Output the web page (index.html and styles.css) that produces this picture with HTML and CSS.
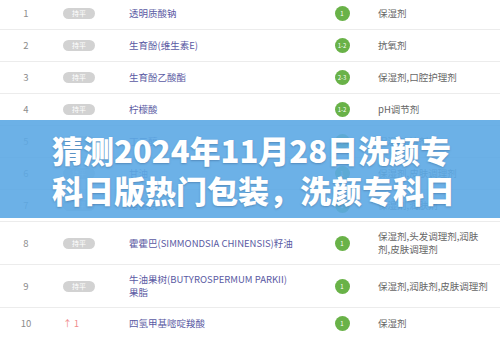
FILE: index.html
```html
<!DOCTYPE html>
<html lang="zh-CN">
<head>
<meta charset="utf-8">
<title>洗颜专科成分排行</title>
<link rel="stylesheet" href="styles.css">
</head>
<body>
<div class="page">
  <div class="list">
    <div class="row">
      <div class="rank">1</div>
      <div class="chg"><span class="pill">持平</span></div>
      <div class="name">透明质酸钠</div>
      <div class="safe"><span class="dot">1</span></div>
      <div class="use">保湿剂</div>
    </div>
    <div class="row">
      <div class="rank">2</div>
      <div class="chg"><span class="pill">持平</span></div>
      <div class="name">生育酚(维生素E)</div>
      <div class="safe"><span class="dot">1-2</span></div>
      <div class="use">抗氧剂</div>
    </div>
    <div class="row">
      <div class="rank">3</div>
      <div class="chg"><span class="pill">持平</span></div>
      <div class="name">生育酚乙酸酯</div>
      <div class="safe"><span class="dot">2-3</span></div>
      <div class="use">保湿剂,口腔护理剂</div>
    </div>
    <div class="row">
      <div class="rank">4</div>
      <div class="chg"><span class="pill">持平</span></div>
      <div class="name">柠檬酸</div>
      <div class="safe"><span class="dot">1-2</span></div>
      <div class="use">pH调节剂</div>
    </div>
    <div class="row">
      <div class="rank">5</div>
      <div class="chg"><span class="pill">持平</span></div>
      <div class="name">丁二醇</div>
      <div class="safe"><span class="dot">1</span></div>
      <div class="use">保湿剂,溶剂</div>
    </div>
    <div class="row">
      <div class="rank">6</div>
      <div class="chg"><span class="pill">持平</span></div>
      <div class="name">甘油</div>
      <div class="safe"><span class="dot">1</span></div>
      <div class="use">保湿剂,皮肤调理剂</div>
    </div>
    <div class="row">
      <div class="rank">7</div>
      <div class="chg"><span class="pill">持平</span></div>
      <div class="name">角鲨烷</div>
      <div class="safe"><span class="dot">1</span></div>
      <div class="use">保湿剂,润肤剂</div>
    </div>
    <div class="row">
      <div class="rank">8</div>
      <div class="chg"><span class="pill">持平</span></div>
      <div class="name">霍霍巴(SIMMONDSIA CHINENSIS)籽油</div>
      <div class="safe"><span class="dot">1</span></div>
      <div class="use">保湿剂,头发调理剂,润肤剂,皮肤调理剂</div>
    </div>
    <div class="row">
      <div class="rank">9</div>
      <div class="chg"><span class="pill">持平</span></div>
      <div class="name">牛油果树(BUTYROSPERMUM PARKII)果脂</div>
      <div class="safe"><span class="dot">1</span></div>
      <div class="use">保湿剂,润肤剂,皮肤调理剂</div>
    </div>
    <div class="row">
      <div class="rank">10</div>
      <div class="chg"><span class="up">↑ 1</span></div>
      <div class="name">四氢甲基嘧啶羧酸</div>
      <div class="safe"><span class="dot">1</span></div>
      <div class="use">保湿剂</div>
    </div>
  </div>
  <div class="banner">
    <h1 class="title">猜测2024年11月28日洗颜专科日版热门包装，洗颜专科日</h1>
  </div>
</div>
</body>
</html>
```

FILE: styles.css
```css
* { box-sizing: border-box; }

html, body {
  margin: 0;
  padding: 0;
  background: #ffffff;
}

body {
  font-family: "Noto Sans CJK SC", "Noto Sans", sans-serif;
  width: 500px;
  height: 339px;
  overflow: hidden;
}

.page {
  position: relative;
  width: 500px;
  height: 339px;
  overflow: hidden;
}

.list {
  margin-top: -2px;
}

.row {
  display: grid;
  grid-template-columns: 52px 77px 177px 72px 1fr;
  align-items: center;
  min-height: 32px;
  padding: 8px 0;
  border-bottom: 1px solid #ececec;
  font-size: 9.5px;
  line-height: 13px;
}

.rank {
  text-align: center;
  color: #8c8c8c;
}

.chg {
  padding-left: 11px;
  display: flex;
  align-items: center;
}

.pill {
  display: inline-block;
  width: 32px;
  height: 11px;
  border-radius: 6px;
  background: #d2d2d2;
  color: #ffffff;
  font-size: 7px;
  line-height: 11px;
  text-align: center;
}

.up {
  color: #ef8a8a;
  font-size: 9px;
}

.name {
  color: #5a5aa3;
  padding-right: 13px;
}

.safe {
  display: flex;
  justify-content: center;
}

.dot {
  width: 15px;
  height: 15px;
  border-radius: 50%;
  background: #69b248;
  color: #ffffff;
  font-size: 6px;
  line-height: 15px;
  text-align: center;
}

.use {
  color: #666666;
  padding-right: 12px;
}

.banner {
  position: absolute;
  left: 0;
  top: 120px;
  width: 500px;
  height: 98px;
  background: rgba(92, 168, 228, 0.9);
  padding: 10px 0 0 52px;
}

.title {
  margin: 0;
  width: 408px;
  font-size: 31px;
  line-height: 40px;
  font-weight: 900;
  color: #ffffff;
  text-shadow: 0 1px 2px rgba(40, 70, 110, 0.35);
}
```
